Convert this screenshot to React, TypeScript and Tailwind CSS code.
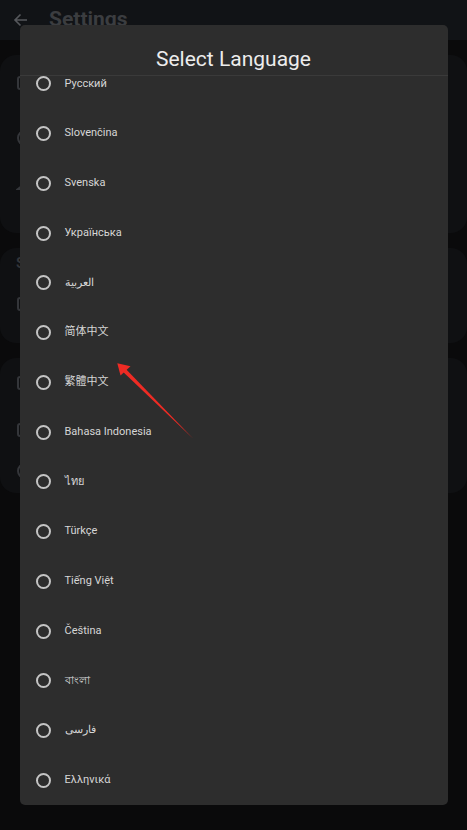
import React from "react";

const languages = [
  "Русский",
  "Slovenčina",
  "Svenska",
  "Українська",
  "العربية",
  "简体中文",
  "繁體中文",
  "Bahasa Indonesia",
  "ไทย",
  "Türkçe",
  "Tiếng Việt",
  "Čeština",
  "বাংলা",
  "فارسی",
  "Ελληνικά",
];

function GhostIcon({ kind }: { kind: "box" | "circle" | "tri" | "s" }) {
  const c = "#34363a";
  if (kind === "box")
    return (
      <svg width="20" height="20" viewBox="0 0 20 20" fill="none">
        <rect x="2" y="4" width="14" height="12" rx="2" stroke={c} strokeWidth="2" />
      </svg>
    );
  if (kind === "circle")
    return (
      <svg width="20" height="20" viewBox="0 0 20 20" fill="none">
        <circle cx="9" cy="10" r="7" stroke={c} strokeWidth="2" />
      </svg>
    );
  if (kind === "tri")
    return (
      <svg width="20" height="20" viewBox="0 0 20 20" fill="none">
        <path d="M2 14 L12 6 L12 14 Z" stroke={c} strokeWidth="2" />
      </svg>
    );
  return <span className="text-[15px] font-semibold text-[#34363a]">S</span>;
}

export default function App() {
  return (
    <div className="relative h-[830px] w-[467px] overflow-hidden bg-[#0a0a0b] font-['Roboto','Noto_Sans','Noto_Sans_CJK_SC',sans-serif]">
      {/* Background settings page */}
      <div className="flex flex-col">
        <div className="flex h-[40px] items-center gap-[20px] bg-[#111316] pl-[13px]">
          <svg width="16" height="16" viewBox="0 0 16 16" fill="none">
            <path d="M14 8H2M7.5 2.5L2 8l5.5 5.5" stroke="#56585c" strokeWidth="1.6" />
          </svg>
          <span className="text-[21px] font-bold text-[#3b3d40]">Settings</span>
        </div>
        <div className="flex flex-col gap-[15px] pt-[15px]">
          <div className="flex h-[178px] flex-col rounded-2xl bg-[#0f1012] pl-[16px]">
            <div className="flex h-[56px] items-center"><GhostIcon kind="box" /></div>
            <div className="flex h-[54px] items-center"><GhostIcon kind="circle" /></div>
            <div className="flex h-[40px] items-center"><GhostIcon kind="tri" /></div>
          </div>
          <div className="flex h-[95px] flex-col rounded-2xl bg-[#0f1012] pl-[16px]">
            <div className="flex h-[30px] items-center"><GhostIcon kind="s" /></div>
            <div className="flex h-[52px] items-center"><GhostIcon kind="box" /></div>
          </div>
          <div className="flex h-[135px] flex-col rounded-2xl bg-[#0f1012] pl-[16px]">
            <div className="flex h-[50px] items-center"><GhostIcon kind="box" /></div>
            <div className="flex h-[44px] items-center"><GhostIcon kind="box" /></div>
            <div className="flex h-[38px] items-center"><GhostIcon kind="circle" /></div>
          </div>
        </div>
      </div>

      {/* Dialog */}
      <div className="absolute inset-0 flex justify-center pt-[25px]">
        <div className="flex h-[780px] w-[428px] flex-col overflow-hidden rounded-[5px] bg-[#2d2d2d]">
          <div className="flex h-[51px] shrink-0 justify-center border-b border-[#3a3a3a] pt-[22px]">
            <span className="text-[21px] leading-[25px] text-[#ececec]">Select Language</span>
          </div>
          <div className="flex-1 overflow-hidden">
            <div className="-mt-[17px] flex flex-col">
              {languages.map((l) => (
                <div key={l} className="flex h-[49.75px] shrink-0 items-center gap-[14px] pl-[16px]">
                  <span className="h-[15px] w-[15px] shrink-0 rounded-full border-2 border-[#c4c4c4]" />
                  <span className="text-[11px] text-[#d6d6d6]">{l}</span>
                </div>
              ))}
            </div>
          </div>
        </div>
      </div>

      {/* Red annotation arrow */}
      <svg className="pointer-events-none absolute left-0 top-0" width="467" height="830" viewBox="0 0 467 830">
        <polygon points="121.6,370.4 124.4,367.6 193,438.5" fill="#ee2b24" />
        <polygon points="117.3,363.3 130.5,366.3 120.5,375.5" fill="#ee2b24" />
      </svg>
    </div>
  );
}
